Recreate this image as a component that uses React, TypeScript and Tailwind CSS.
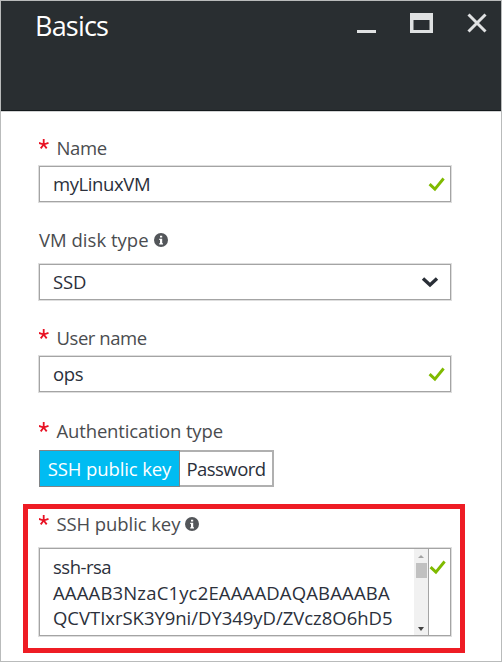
import type { ReactNode } from "react";

function Check() {
  return (
    <svg width="18" height="16" viewBox="0 0 18 16" className="shrink-0">
      <path d="M1.6 8.1 L6.9 13.1 L15.6 2.5" fill="none" stroke="#7fba00" strokeWidth="2.9" />
    </svg>
  );
}

function Info() {
  return (
    <svg width="14" height="14" viewBox="0 0 14 14" className="shrink-0">
      <circle cx="7" cy="7" r="7" fill="#53565a" />
      <path d="M6 2.8h2.2v1.8H6zM5.2 5.8h3v4.4H9v1.2H5.2v-1.2H6V7h-.8z" fill="#fff" />
    </svg>
  );
}

function Label({ children, required, info, className }: { children: ReactNode; required?: boolean; info?: boolean; className: string }) {
  return (
    <div className="flex h-[26px] items-center whitespace-nowrap text-[18.5px] leading-[26px] text-[#4a4c4f]">
      {required && (
        <svg width="17.5" height="26" viewBox="0 0 17.5 26" className="shrink-0">
          <path d="M4.7 9.8V4M4.7 9.5L-.1 7.9M4.7 9.5L9.5 7.9M4.7 9.5L1.7 13.4M4.7 9.5L7.7 13.4" stroke="#e81123" strokeWidth="1.8" fill="none" />
        </svg>
      )}
      <span className={className}>{children}</span>
      {info && <span className="ml-[5px]"><Info /></span>}
    </div>
  );
}

function Field({ children, icon }: { children: ReactNode; icon: ReactNode }) {
  return (
    <div className="flex h-[36px] w-[412px] items-center justify-between border border-[#a4a4a4] pb-px pl-[13px] pr-[4px] text-[18.5px] text-[#2b303b] shadow-[0_0_0_1px_#dedede]">
      {children}
      {icon}
    </div>
  );
}

export default function App() {
  return (
    <div className="flex h-[662px] w-[502px] flex-col overflow-hidden border border-[#b9bbbb] bg-white font-['Open_Sans','Noto_Sans',sans-serif]">
      <header className="flex h-[110px] shrink-0 items-start justify-between border-b border-[#14191c] bg-[#292e31] pl-[34px] pr-[14px] text-white shadow-[0_1px_0_#d2d3d4]">
        <h1 className="mt-[7px] text-[27px] leading-[36px] tracking-[-0.8px]">Basics</h1>
        <div className="mt-[12px] flex items-start">
          <div className="mt-[17px] h-[3px] w-[19px] bg-[#e0e2e3]" />
          <svg width="23" height="20" viewBox="0 0 23 20" className="ml-[34px]">
            <path fillRule="evenodd" d="M0 0h23v20H0zM3.5 7v10h16V7z" fill="#dfe1e2" />
          </svg>
          <svg width="20" height="20" viewBox="0 0 20 20" className="ml-[34px]">
            <path d="M1.5 1.5L18.5 18.5M18.5 1.5L1.5 18.5" stroke="#e0e2e3" strokeWidth="3" />
          </svg>
        </div>
      </header>
      <main className="flex flex-col">
        <section className="ml-[38px] mt-[24px]">
          <Label required className="tracking-[-0.4px]">Name</Label>
          <div className="h-[5px]" />
          <Field icon={<Check />}><span className="tracking-[-0.4px]">myLinuxVM</span></Field>
        </section>
        <section className="ml-[38px] mt-[25px]">
          <Label info className="tracking-[0.02px]">VM disk type</Label>
          <div className="h-[11px]" />
          <Field
            icon={
              <svg width="18" height="14" viewBox="0 0 18 14" className="mr-[7px]">
                <path d="M2 3.5L9 10L16 3.5" fill="none" stroke="#292e36" strokeWidth="3.4" />
              </svg>
            }
          >
            <span className="tracking-[-0.1px]">SSD</span>
          </Field>
        </section>
        <section className="ml-[38px] mt-[25px]">
          <Label required className="tracking-[-0.45px]">User name</Label>
          <div className="h-[5px]" />
          <Field icon={<Check />}><span className="tracking-[-0.4px]">ops</span></Field>
        </section>
        <section className="ml-[38px] mt-[26px]">
          <Label required className="tracking-[-0.15px]">Authentication type</Label>
          <div className="h-[6px]" />
          <div className="flex h-[37px] w-[235px] whitespace-nowrap text-[18.5px]">
            <button className="flex w-[141px] shrink-0 items-center justify-center border border-[#808487] bg-[#00bcf2] text-white"><span className="font-medium tracking-[-0.12px]">SSH public key</span></button>
            <button className="flex flex-1 items-center justify-center border-2 border-l-0 border-[#b0b0b0] text-[#2b303b]"><span className="tracking-[-0.55px]">Password</span></button>
          </div>
        </section>
        <section className="ml-[22px] mt-[17px] h-[149px] w-[442px] border-[5px] border-[#ee1c24] pl-[11px] pt-[2px]">
          <Label required info className="tracking-[-0.09px]">SSH public key</Label>
          <div className="mt-[11px] flex h-[88px] w-[412px] border border-[#a4a4a4] shadow-[0_0_0_1px_#dedede]">
            <div className="w-[374px] shrink-0 overflow-hidden whitespace-nowrap pl-[13px] pt-[5px] text-[18.5px] leading-[25.5px] text-[#2b303b]">
              <div><span className="tracking-[-0.5px]">ssh-rsa</span></div>
              <div><span className="tracking-[0.16px]">AAAAB3NzaC1yc2EAAAADAQABAAABA</span></div>
              <div><span className="tracking-[-0.03px]">QCVTIxrSK3Y9ni/DY349yD/ZVcz8O6hD5</span></div>
            </div>
            <div className="flex w-[14px] shrink-0 flex-col items-center bg-[#f1f1f1]">
              <svg width="6" height="3" viewBox="0 0 6 3" className="mt-[6px]"><path d="M3 0L6 3H0z" fill="#a3a3a3" /></svg>
              <div className="mt-[5px] h-[15px] w-[11px] bg-[#c1c1c1]" />
              <svg width="6" height="4" viewBox="0 0 6 4" className="mb-[4px] mt-auto"><path d="M0 0H6L3 4z" fill="#404040" /></svg>
            </div>
            <div className="flex-1 border-l border-[#a4a4a4] pt-[10px]"><Check /></div>
          </div>
        </section>
      </main>
    </div>
  );
}
